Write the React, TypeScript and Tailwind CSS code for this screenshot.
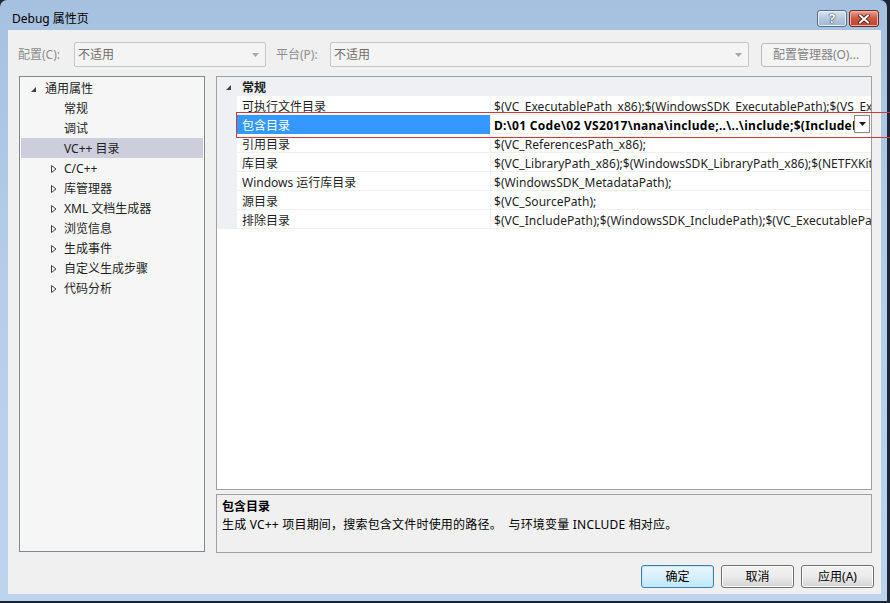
import React from "react";

const font = "font-['Noto_Sans','Noto_Sans_CJK_SC',sans-serif]";

const treeItems: { label: string; kind: "root" | "child" | "collapsed"; selected?: boolean }[] = [
  { label: "通用属性", kind: "root" },
  { label: "常规", kind: "child" },
  { label: "调试", kind: "child" },
  { label: "VC++ 目录", kind: "child", selected: true },
  { label: "C/C++", kind: "collapsed" },
  { label: "库管理器", kind: "collapsed" },
  { label: "XML 文档生成器", kind: "collapsed" },
  { label: "浏览信息", kind: "collapsed" },
  { label: "生成事件", kind: "collapsed" },
  { label: "自定义生成步骤", kind: "collapsed" },
  { label: "代码分析", kind: "collapsed" },
];

const props: { name: string; value: string; selected?: boolean }[] = [
  { name: "可执行文件目录", value: "$(VC_ExecutablePath_x86);$(WindowsSDK_ExecutablePath);$(VS_ExecutablePath);$(MSBuild_ExecutablePath)" },
  { name: "包含目录", value: "D:\\01 Code\\02 VS2017\\nana\\include;..\\..\\include;$(IncludePath)", selected: true },
  { name: "引用目录", value: "$(VC_ReferencesPath_x86);" },
  { name: "库目录", value: "$(VC_LibraryPath_x86);$(WindowsSDK_LibraryPath_x86);$(NETFXKitsDir)Lib\\um\\x86" },
  { name: "Windows 运行库目录", value: "$(WindowsSDK_MetadataPath);" },
  { name: "源目录", value: "$(VC_SourcePath);" },
  { name: "排除目录", value: "$(VC_IncludePath);$(WindowsSDK_IncludePath);$(VC_ExecutablePath_x86);$(VC_LibraryPath_x86)" },
];

function Expanded() {
  return (
    <svg width="5" height="5" viewBox="0 0 5 5" className="shrink-0">
      <path d="M5 0 L5 5 L0 5 Z" fill="#404040" />
    </svg>
  );
}

function Collapsed() {
  return (
    <svg width="6" height="8" viewBox="0 0 6 8" className="shrink-0">
      <path d="M0.5 0.5 L5 4 L0.5 7.5 Z" fill="none" stroke="#404040" strokeWidth="1" />
    </svg>
  );
}

function ComboArrow() {
  return (
    <svg width="7" height="4" viewBox="0 0 7 4">
      <path d="M0 0 L7 0 L3.5 4 Z" fill="#a8a8a8" />
    </svg>
  );
}

function DisabledCombo({ width, text }: { width: string; text: string }) {
  return (
    <div className={`${width} flex h-[25px] items-center justify-between rounded-[2px] border border-[#c3c6c9] bg-[#f4f4f4] pl-[3px] pr-[6px] text-[#6d6d6d]`}>
      <span>{text}</span>
      <ComboArrow />
    </div>
  );
}

function DlgButton({ label, primary }: { label: string; primary?: boolean }) {
  return (
    <div
      className={
        primary
          ? "flex h-[23px] w-[73px] items-center justify-center rounded-[3px] border border-[#3c7fb1] bg-gradient-to-b from-[#eaf6fd] via-[#d9f0fc] to-[#bee6fd] text-black shadow-[inset_0_0_0_1px_#c4e5f6]"
          : "flex h-[23px] w-[73px] items-center justify-center rounded-[3px] border border-[#707070] bg-gradient-to-b from-[#f2f2f2] via-[#ebebeb] to-[#d4d4d4] text-black shadow-[inset_0_0_0_1px_#fcfcfc]"
      }
    >
      {label}
    </div>
  );
}

export default function App() {
  return (
    <div className={`relative h-[603px] w-[890px] overflow-hidden bg-[#1c2733] text-[12px] ${font}`}>
      <div className="flex h-[601px] w-[887px] flex-col rounded-t-[7px] bg-gradient-to-b from-[#a6c1df] via-[#b6cee9] to-[#bdd4ed]">
        {/* title bar */}
        <div className="flex h-[30px] pl-[12px] pr-[8px]">
          <span className="mt-[10px] leading-[18px] text-black">Debug 属性页</span>
          <div className="ml-auto mt-[10px] flex gap-[2px] self-start">
            <div className="flex h-[17px] w-[30px] items-center justify-center rounded-[3px] border border-[#5b6e87] bg-gradient-to-b from-[#dbe6f3] via-[#b5c8de] to-[#9fb6d2] shadow-[inset_0_0_0_1px_#e6eef8]">
              <span className="text-[13px] font-bold leading-none text-white [text-shadow:0_0_1px_#2a3a50,0_0_1px_#2a3a50,0_0_1px_#2a3a50]">?</span>
            </div>
            <div className="flex h-[17px] w-[30px] items-center justify-center rounded-[3px] border border-[#6b2a25] bg-gradient-to-b from-[#e8a194] via-[#d0563f] to-[#c3422c] shadow-[inset_0_0_0_1px_#eeb2a6]">
              <svg width="12" height="10" viewBox="0 0 12 10">
                <path d="M2 1.5 L10 8.5 M10 1.5 L2 8.5" stroke="#3a1812" strokeWidth="3.6" strokeLinecap="square" />
                <path d="M2 1.5 L10 8.5 M10 1.5 L2 8.5" stroke="#ffffff" strokeWidth="2" strokeLinecap="square" />
              </svg>
            </div>
          </div>
        </div>

        {/* client area */}
        <div className="ml-[8px] flex h-[564px] w-[873px] flex-col bg-[#f0f0f0]">
          <div className="mt-[12px] flex h-[25px] items-center pl-[10px]">
            <span className="w-[56px] text-[#8d8d8d]">配置(C):</span>
            <DisabledCombo width="w-[192px]" text="不适用" />
            <span className="ml-[10px] w-[54px] text-[#8d8d8d]">平台(P):</span>
            <DisabledCombo width="w-[419px]" text="不适用" />
            <div className="ml-[12px] flex h-[24px] w-[110px] items-center justify-center rounded-[3px] border border-[#b8babd] bg-[#f4f4f4] text-[#838383]">
              配置管理器(O)...
            </div>
          </div>

          <div className="mt-[9px] flex pl-[11px]">
            {/* tree */}
            <div className="h-[476px] w-[186px] border border-[#828790] bg-[#f6f6f6] pt-[1px]">
              {treeItems.map((t) => (
                <div
                  key={t.label}
                  className={`mx-[1px] flex h-[20px] items-center pt-[2px] ${t.selected ? "bg-[#cccedb]" : ""} ${
                    t.kind === "root" ? "pl-[10px]" : t.kind === "child" ? "pl-[43px]" : "pl-[30px]"
                  }`}
                >
                  {t.kind === "root" && <Expanded />}
                  {t.kind === "collapsed" && <Collapsed />}
                  <span className={`leading-[16px] text-[#1e1e1e] ${t.kind === "root" ? "ml-[9px]" : t.kind === "collapsed" ? "ml-[7px]" : ""}`}>{t.label}</span>
                </div>
              ))}
            </div>

            {/* right column */}
            <div className="ml-[11px] flex w-[656px] flex-col">
              <div className="h-[414px] overflow-hidden border border-[#a0a0a0] bg-white">
                <div className="flex h-[19px] items-center bg-[#eff0f3] pl-[9px] pt-[2px]">
                  <Expanded />
                  <span className="ml-[11px] font-bold leading-[16px] text-[#1e1e1e]">常规</span>
                </div>
                {props.map((p) => (
                  <div key={p.name} className="flex h-[19px]">
                    <div className="w-[20px] shrink-0 bg-[#eff0f3]" />
                    <div
                      className={`flex w-[253px] shrink-0 items-center border-b pl-[5px] pt-[3px] leading-[14px] ${
                        p.selected ? "border-[#3399ff] bg-[#3399ff] text-white" : "border-[#f0f0f0] text-[#1e1e1e]"
                      }`}
                    >
                      {p.name}
                    </div>
                    <div className="w-[1px] shrink-0 bg-[#f0f0f0]" />
                    <div className="flex min-w-0 flex-1 items-center border-b border-[#f0f0f0]">
                      <span
                        className={`min-w-0 flex-1 overflow-hidden whitespace-nowrap pl-[3px] pt-[3px] leading-[14px] ${
                          p.selected ? "font-bold tracking-[0.3px] text-black" : "tracking-[0.05px] text-[#1e1e1e]"
                        }`}
                      >
                        {p.value}
                      </span>
                      {p.selected && (
                        <div className="mr-[1px] flex h-[18px] w-[16px] shrink-0 items-center justify-center border border-[#8a8a8a] bg-white">
                          <svg width="7" height="4" viewBox="0 0 7 4">
                            <path d="M0 0 L7 0 L3.5 4 Z" fill="#1e1e1e" />
                          </svg>
                        </div>
                      )}
                    </div>
                  </div>
                ))}
              </div>

              <div className="mt-[4px] h-[59px] border border-[#a0a0a0] bg-[#f0f0f0] pl-[5px] pt-[3px]">
                <div className="h-[18px] font-bold leading-[18px] text-black">包含目录</div>
                <div className="h-[18px] whitespace-pre leading-[18px] tracking-[0.2px] text-black">
                  生成 VC++ 项目期间，搜索包含文件时使用的路径。  与环境变量 INCLUDE 相对应。
                </div>
              </div>
            </div>
          </div>

          <div className="mt-[12px] flex justify-end gap-[7px] pr-[7px]">
            <DlgButton label="确定" primary />
            <DlgButton label="取消" />
            <DlgButton label="应用(A)" />
          </div>
        </div>
      </div>

      {/* red annotation box */}
      <div className="absolute left-[236px] top-[112px] h-[26px] w-[700px] border border-r-0 border-[#cc3a3a]" />
    </div>
  );
}
